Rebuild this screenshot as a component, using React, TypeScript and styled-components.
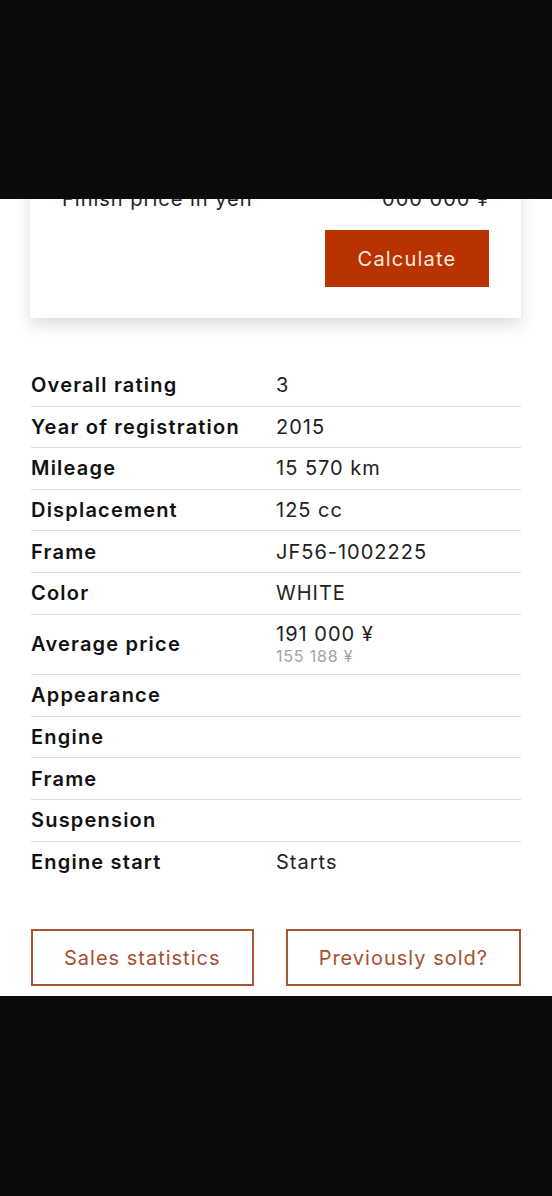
import React from "react";
import styled, { createGlobalStyle } from "styled-components";

const GlobalStyle = createGlobalStyle`
  html, body {
    margin: 0;
    padding: 0;
    background: #0b0b0b;
  }

  body {
    font-family: "Inter", "Noto Sans", sans-serif;
    letter-spacing: 1px;
    -webkit-font-smoothing: antialiased;
  }
`;

type Spec = {
  label: string;
  value?: string;
  sub?: string;
};

const specs: Spec[] = [
  { label: "Overall rating", value: "3" },
  { label: "Year of registration", value: "2015" },
  { label: "Mileage", value: "15 570 km" },
  { label: "Displacement", value: "125 cc" },
  { label: "Frame", value: "JF56-1002225" },
  { label: "Color", value: "WHITE" },
  { label: "Average price", value: "191 000 ¥", sub: "155 188 ¥" },
  { label: "Appearance" },
  { label: "Engine" },
  { label: "Frame" },
  { label: "Suspension" },
  { label: "Engine start", value: "Starts" },
];

const Screen = styled.div`
  width: 552px;
  height: 1196px;
  display: flex;
  flex-direction: column;
  background: #0b0b0b;
`;

const Letterbox = styled.div<{ $grow?: boolean }>`
  flex: ${(p) => (p.$grow ? "1 1 auto" : "0 0 199px")};
  background: #0b0b0b;
`;

const Viewport = styled.main`
  flex: 0 0 797px;
  overflow: hidden;
  background: #ffffff;
`;

// page is scrolled a little, the top of the card sits above the fold
const Page = styled.div`
  margin-top: -32px;
  padding: 0 31px 0 30px;
  display: flex;
  flex-direction: column;
`;

const Card = styled.section`
  display: flex;
  flex-direction: column;
  padding: 20px 32px 31px 32px;
  background: #ffffff;
  box-shadow: 0 7px 14px rgba(40, 48, 72, 0.16);
`;

const PriceRow = styled.div`
  display: flex;
  justify-content: space-between;
  font-size: 20px;
  line-height: 24px;
  color: #222222;
`;

const CalcButton = styled.button`
  align-self: flex-end;
  margin-top: 19px;
  width: 164px;
  height: 57px;
  border: none;
  border-radius: 0;
  background: #b83300;
  color: #fdeadf;
  font-family: inherit;
  font-size: 20px;
  letter-spacing: 1.2px;
  cursor: pointer;
`;

const Table = styled.div`
  margin: 47px 0 0 1px;
  display: flex;
  flex-direction: column;
`;

const Row = styled.div<{ $last?: boolean }>`
  display: grid;
  grid-template-columns: 245px 1fr;
  align-items: center;
  padding: 8.3px 0;
  border-bottom: ${(p) => (p.$last ? "none" : "1px solid #dcdcdc")};
`;

const Label = styled.div`
  font-size: 20px;
  line-height: 24px;
  font-weight: 600;
  letter-spacing: 1.2px;
  color: #111111;
`;

const Value = styled.div`
  display: flex;
  flex-direction: column;
  font-size: 20px;
  line-height: 24px;
  color: #222222;
`;

const Main = styled.span<{ $stacked?: boolean }>`
  line-height: ${(p) => (p.$stacked ? "23px" : "24px")};
`;

const Sub = styled.span`
  font-size: 16px;
  line-height: 20px;
  letter-spacing: 0.8px;
  color: #a3a3a3;
`;

const Actions = styled.div`
  margin: 47px 0 0 1px;
  display: flex;
  justify-content: space-between;
`;

const OutlineButton = styled.button`
  height: 57px;
  padding: 0 31px;
  border: 2px solid #aa5532;
  border-radius: 0;
  background: #ffffff;
  color: #a4512f;
  font-family: inherit;
  font-size: 20px;
  letter-spacing: 1px;
  cursor: pointer;
`;

export default function App() {
  return (
    <>
      <GlobalStyle />
      <Screen>
        <Letterbox />
        <Viewport>
          <Page>
            <Card>
              <PriceRow>
                <span>Finish price in yen</span>
                <span>000 000 ¥</span>
              </PriceRow>
              <CalcButton>Calculate</CalcButton>
            </Card>

            <Table>
              {specs.map((s, i) => (
                <Row key={i} $last={i === specs.length - 1}>
                  <Label>{s.label}</Label>
                  <Value>
                    {s.value && <Main $stacked={!!s.sub}>{s.value}</Main>}
                    {s.sub && <Sub>{s.sub}</Sub>}
                  </Value>
                </Row>
              ))}
            </Table>

            <Actions>
              <OutlineButton>Sales statistics</OutlineButton>
              <OutlineButton>Previously sold?</OutlineButton>
            </Actions>
          </Page>
        </Viewport>
        <Letterbox $grow />
      </Screen>
    </>
  );
}
